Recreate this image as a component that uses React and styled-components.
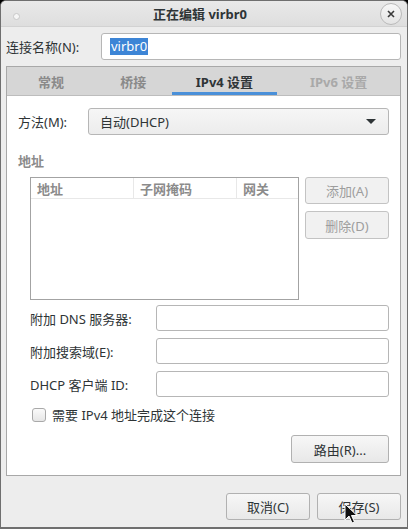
import React from "react";
import styled, { createGlobalStyle } from "styled-components";

const GlobalStyle = createGlobalStyle`
  html, body {
    margin: 0;
    padding: 0;
    background: #000;
  }
  body {
    font-family: "Noto Sans", "Noto Sans CJK SC", sans-serif;
    font-size: 13px;
    color: #2e3436;
  }
  * { box-sizing: border-box; }
`;

const Window = styled.div`
  position: relative;
  width: 408px;
  height: 529px;
  background: #ededed;
  border: 1px solid #6f6f6f;
  border-bottom-width: 2px;
  border-radius: 6px 6px 0 0;
  display: flex;
  flex-direction: column;
  overflow: hidden;
`;

const TitleBar = styled.div`
  height: 26px;
  display: flex;
  align-items: center;
  justify-content: space-between;
  padding: 0 5px 0 12px;
  background: linear-gradient(#e9e9e9, #dedede);
  border-bottom: 1px solid #d2d2d2;
`;

const Title = styled.div`
  font-weight: bold;
  font-size: 13px;
  color: #2e3436;
`;

const Dot = styled.span`
  width: 7px;
  height: 7px;
  margin-top: 5px;
  border-radius: 50%;
  background: #f6f6f6;
  border: 1px solid #c8c8c8;
`;

const CloseButton = styled.span`
  width: 22px;
  height: 22px;
  border-radius: 50%;
  border: 1px solid #b9b9b9;
  background: linear-gradient(#f7f7f7, #e4e4e4);
  display: flex;
  align-items: center;
  justify-content: center;
`;

const NameRow = styled.div`
  display: flex;
  align-items: center;
  margin: 6px 6px 0 5px;
`;

const Label = styled.span`
  white-space: nowrap;
  width: ${(p) => p.$width || "auto"};
  flex-shrink: 0;
`;

const Entry = styled.div`
  flex: 1;
  height: ${(p) => p.$height || 26}px;
  background: #fff;
  border: 1px solid #b6b6b6;
  border-radius: 3px;
  display: flex;
  align-items: center;
  padding-left: 8px;
`;

const Selected = styled.span`
  background: #3d85d6;
  color: #fff;
  line-height: 17px;
  padding: 0 1px;
`;

const Notebook = styled.div`
  margin: 6px 6px 0 5px;
  height: 410px;
  border: 1px solid #a8a8a8;
  display: flex;
  flex-direction: column;
`;

const TabBar = styled.div`
  height: 29px;
  background: #d6d6d6;
  border-bottom: 1px solid #bdbdbd;
  display: flex;
`;

const Tab = styled.div`
  width: ${(p) => p.$width}px;
  display: flex;
  align-items: center;
  justify-content: center;
  font-weight: bold;
  color: ${(p) => (p.$active ? "#2e3436" : p.$dim ? "#a9a9a9" : "#8a8a8a")};
  box-shadow: ${(p) => (p.$active ? "inset 0 -3px 0 #4a90d9" : "none")};
`;

const Page = styled.div`
  flex: 1;
  background: #fff;
  padding: 12px 11px 0 11px;
  display: flex;
  flex-direction: column;
`;

const MethodRow = styled.div`
  display: flex;
  align-items: center;
`;

const Combo = styled.div`
  flex: 1;
  height: 27px;
  border: 1px solid #b6b6b6;
  border-radius: 3px;
  background: linear-gradient(#f6f6f6, #ececec);
  display: flex;
  align-items: center;
  justify-content: space-between;
  padding: 0 12px 0 11px;
`;

const Arrow = styled.span`
  width: 0;
  height: 0;
  border-left: 5px solid transparent;
  border-right: 5px solid transparent;
  border-top: 5px solid #2e3436;
`;

const Section = styled.div`
  margin-top: 16px;
  font-weight: bold;
  color: #8b8b8b;
`;

const AddressArea = styled.div`
  display: flex;
  gap: 6px;
  margin: 7px 0 0 12px;
`;

const Table = styled.div`
  width: 269px;
  height: 123px;
  border: 1px solid #a3a3a3;
  background: #fff;
`;

const TableHead = styled.div`
  display: grid;
  grid-template-columns: 102px 103px 1fr;
  height: 21px;
  border-bottom: 1px solid #e8e8e8;
`;

const HeadCell = styled.div`
  font-weight: bold;
  color: #8b8b8b;
  padding-left: 6px;
  display: flex;
  align-items: center;
  border-left: ${(p) => (p.$first ? "none" : "1px solid #e8e8e8")};
`;

const SideButtons = styled.div`
  display: flex;
  flex-direction: column;
  gap: 7px;
`;

const Button = styled.div`
  width: ${(p) => p.$width}px;
  height: ${(p) => p.$height || 27}px;
  border: 1px solid ${(p) => (p.$disabled ? "#c3c3c3" : "#b1b1b1")};
  border-radius: 3px;
  background: ${(p) =>
    p.$disabled ? "#f1f1f1" : "linear-gradient(#f7f7f7, #e8e8e8)"};
  color: ${(p) => (p.$disabled ? "#9d9d9d" : "#2e3436")};
  display: flex;
  align-items: center;
  justify-content: center;
`;

const Fields = styled.div`
  display: flex;
  flex-direction: column;
  gap: 7px;
  margin: 5px 0 0 12px;
`;

const FieldRow = styled.div`
  display: flex;
  align-items: center;
`;

const CheckRow = styled.label`
  display: flex;
  align-items: center;
  gap: 6px;
  margin: 8px 0 0 14px;
`;

const Check = styled.span`
  width: 14px;
  height: 14px;
  border: 1px solid #a9a9a9;
  border-radius: 3px;
  background: linear-gradient(#fafafa, #e6e6e6);
`;

const RouteRow = styled.div`
  display: flex;
  justify-content: flex-end;
  margin-top: 11px;
`;

const Footer = styled.div`
  display: flex;
  justify-content: flex-end;
  gap: 7px;
  margin: 17px 6px 0 0;
`;

const Cursor = styled.svg`
  position: absolute;
  left: 343px;
  top: 502px;
`;

const Shadow = styled.div`
  position: absolute;
  left: 269px;
  right: 0;
  bottom: -2px;
  height: 2px;
  background: #000;
`;

export default function App() {
  return (
    <>
      <GlobalStyle />
      <Window>
        <TitleBar>
          <Dot />
          <Title>正在编辑 virbr0</Title>
          <CloseButton>
            <svg width="10" height="10" viewBox="0 0 10 10">
              <path d="M2 2 L8 8 M8 2 L2 8" stroke="#3a3a3a" strokeWidth="1.6" />
            </svg>
          </CloseButton>
        </TitleBar>

        <NameRow>
          <Label $width="95px">连接名称(N):</Label>
          <Entry $height={27}>
            <Selected>virbr0</Selected>
          </Entry>
        </NameRow>

        <Notebook>
          <TabBar>
            <Tab $width={88}>常规</Tab>
            <Tab $width={77}>桥接</Tab>
            <Tab $width={106} $active>IPv4 设置</Tab>
            <Tab $width={123} $dim>IPv6 设置</Tab>
          </TabBar>
          <Page>
            <MethodRow>
              <Label $width="70px">方法(M):</Label>
              <Combo>
                <span>自动(DHCP)</span>
                <Arrow />
              </Combo>
            </MethodRow>

            <Section>地址</Section>
            <AddressArea>
              <Table>
                <TableHead>
                  <HeadCell $first>地址</HeadCell>
                  <HeadCell>子网掩码</HeadCell>
                  <HeadCell>网关</HeadCell>
                </TableHead>
              </Table>
              <SideButtons>
                <Button $width={84} $disabled>添加(A)</Button>
                <Button $width={84} $height={28} $disabled>删除(D)</Button>
              </SideButtons>
            </AddressArea>

            <Fields>
              <FieldRow>
                <Label $width="126px">附加 DNS 服务器:</Label>
                <Entry />
              </FieldRow>
              <FieldRow>
                <Label $width="126px">附加搜索域(E):</Label>
                <Entry />
              </FieldRow>
              <FieldRow>
                <Label $width="126px">DHCP 客户端 ID:</Label>
                <Entry />
              </FieldRow>
            </Fields>

            <CheckRow>
              <Check />
              <span>需要 IPv4 地址完成这个连接</span>
            </CheckRow>

            <RouteRow>
              <Button $width={98} $height={28}>路由(R)...</Button>
            </RouteRow>
          </Page>
        </Notebook>

        <Footer>
          <Button $width={84}>取消(C)</Button>
          <Button $width={84}>保存(S)</Button>
        </Footer>

        <Cursor width="14" height="22" viewBox="0 0 14 22">
          <path
            d="M1 1 L1 17 L5 13 L8 20 L10.5 19 L7.5 12.5 L13 12.5 Z"
            fill="#111"
            stroke="#fff"
            strokeWidth="1"
          />
        </Cursor>
        <Shadow />
      </Window>
    </>
  );
}
